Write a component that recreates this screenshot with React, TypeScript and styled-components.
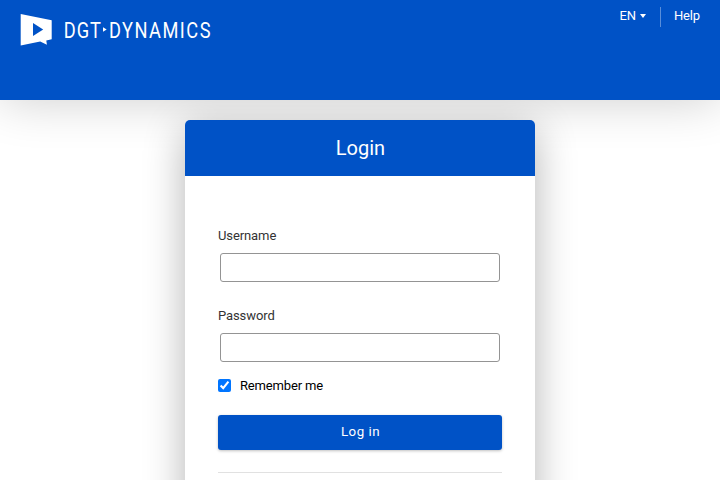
import React from "react";
import styled, { createGlobalStyle } from "styled-components";

const BLUE = "#0052c6";

const GlobalStyle = createGlobalStyle`
  * { box-sizing: border-box; }
  html, body { margin: 0; height: 100%; }
  body { background: #fff; font-family: Roboto, "Liberation Sans", sans-serif; font-size: 13px; overflow: hidden; }
  #root { height: 100%; }
`;

const Page = styled.div`
  height: 480px;
  overflow: hidden;
  display: flex;
  flex-direction: column;
  align-items: center;
`;

const Header = styled.header`
  position: relative;
  z-index: 1;
  flex: none;
  width: 100%;
  height: 100px;
  padding: 0 20px;
  display: flex;
  justify-content: space-between;
  align-items: flex-start;
  color: #fff;
  background: ${BLUE};
`;

const HeaderShadow = styled.div`
  width: 100%;
  flex: none;
  height: 100px;
  margin-bottom: -100px;
  box-shadow: 0 0 50px rgba(0, 0, 0, 0.2);
`;

const Logo = styled.svg`
  display: block;
  width: 200px;
  height: 60px;
  font-family: Roboto, sans-serif;
`;

const Nav = styled.nav`
  display: flex;
  align-items: center;
  padding-top: 7px;
  height: 27px;
`;

const Language = styled.a`
  display: flex;
  align-items: center;
  gap: 4px;
  height: 20px;
  padding-right: 14px;
  margin-top: -4px;
  letter-spacing: -0.15px;
`;

const Caret = styled.svg`
  display: block;
  width: 6px;
  height: 4px;
  margin-top: 2px;
`;

const Divider = styled.span`
  width: 1px;
  height: 20px;
  background: rgba(255, 255, 255, 0.35);
  margin-right: 13px;
`;

const Help = styled.a`
  margin-top: -4px;
  letter-spacing: -0.15px;
`;

const Card = styled.main`
  flex: none;
  width: 350px;
  height: 460px;
  margin-top: 20px;
  border-radius: 5px;
  background: #fff;
  box-shadow: 0 10px 40px rgba(0, 0, 0, 0.3);
`;

const Title = styled.h1`
  margin: 0;
  padding-left: 1px;
  height: 56px;
  line-height: 56px;
  text-align: center;
  font-size: 20px;
  font-weight: 400;
  color: #fff;
  background: ${BLUE};
  border-radius: 5px 5px 0 0;
`;

const Form = styled.form`
  display: flex;
  flex-direction: column;
  padding: 50px 33px 0;
`;

const Field = styled.label`
  display: flex;
  flex-direction: column;
  height: 80px;
  line-height: 20px;
  letter-spacing: -0.1px;
  color: #333;
`;

const Input = styled.input`
  height: 29px;
  margin: 7px 2px 0;
  padding: 0 8px;
  border: 1px solid #949494;
  border-radius: 3px;
  background: #fff;
`;

const Remember = styled.label`
  display: flex;
  align-items: center;
  gap: 9px;
  height: 20px;
  margin-top: -11px;
  letter-spacing: -0.15px;
  color: #000;
`;

const Checkbox = styled.input`
  width: 13px;
  height: 13px;
  margin: 0;
`;

const Submit = styled.button`
  height: 35px;
  margin-top: 20px;
  padding: 0 0 2px 1px;
  border: 0;
  border-radius: 3px;
  color: #fff;
  background: ${BLUE};
  font: 400 13.33px Roboto, sans-serif;
  letter-spacing: 0.5px;
  box-shadow: 0 1px 3px rgba(0, 0, 0, 0.25);
`;

const Rule = styled.hr`
  width: 100%;
  height: 1px;
  margin: 22px 0 0;
  border: 0;
  background: #e1e1e1;
`;

export default function App() {
  return (
    <>
      <GlobalStyle />
      <Page>
        <HeaderShadow />
        <Header>
          <Logo viewBox="20 0 200 60" aria-label="DGT Dynamics">
            <path fill="#fff" d="M20.7 13.9 51.7 20.2V39.3L46.3 40.5 46.9 44.8 40.2 41.6 20.7 45.6Z" />
            <path fill={BLUE} d="M33 23 43.2 29.4 33 36Z" />
            <g fill="#fff" fontSize="22.8" fontWeight="400">
              <text transform="translate(63.8 38.2) scale(.8 1)" textLength="46.5" lengthAdjust="spacing">DGT</text>
              <text transform="translate(108.9 38.2) scale(.8 1)" textLength="127" lengthAdjust="spacing">DYNAMICS</text>
            </g>
            <path fill="#fff" d="M103 27.3 106.7 29.5 103 31.7Z" />
          </Logo>
          <Nav>
            <Language>
              EN
              <Caret viewBox="0 0 6 4"><path fill="#fff" d="M0 0H6L3 4Z" /></Caret>
            </Language>
            <Divider />
            <Help>Help</Help>
          </Nav>
        </Header>
        <Card>
          <Title>Login</Title>
          <Form>
            <Field>Username<Input type="text" /></Field>
            <Field>Password<Input type="password" /></Field>
            <Remember><Checkbox type="checkbox" defaultChecked />Remember me</Remember>
            <Submit type="button">Log in</Submit>
            <Rule />
          </Form>
        </Card>
      </Page>
    </>
  );
}
